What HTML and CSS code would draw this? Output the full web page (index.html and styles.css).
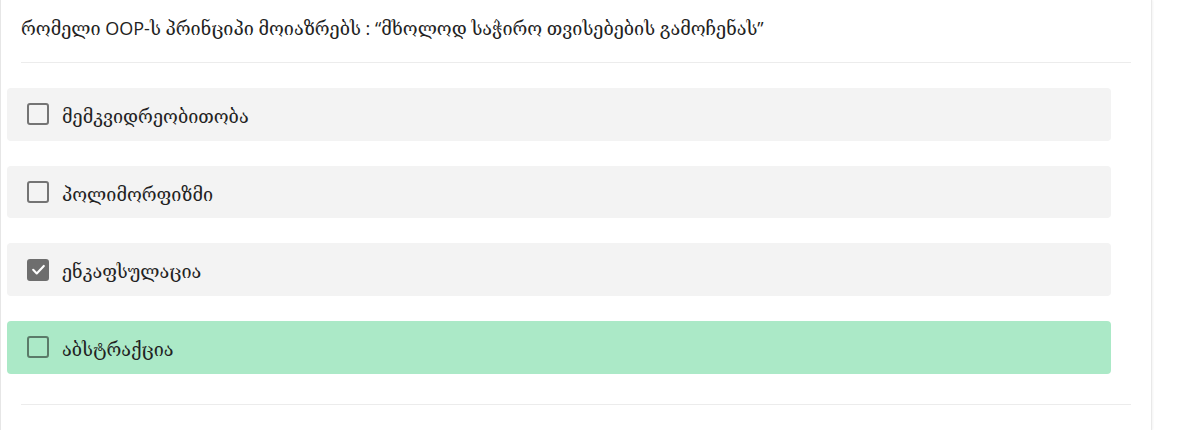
FILE: index.html
```html
<!DOCTYPE html>
<html lang="ka">
<head>
<meta charset="utf-8">
<link rel="stylesheet" href="styles.css">
</head>
<body>
<div class="page">
  <div class="card">
    <div class="question">რომელი OOP-ს პრინციპი მოიაზრებს : “მხოლოდ საჭირო თვისებების გამოჩენას”</div>
    <div class="options">
      <label class="option">
        <span class="box"></span>
        <span class="text">მემკვიდრეობითობა</span>
      </label>
      <label class="option">
        <span class="box"></span>
        <span class="text">პოლიმორფიზმი</span>
      </label>
      <label class="option">
        <span class="box checked">
          <svg viewBox="0 0 24 24" width="17" height="17"><path d="M4.5 12.5l5 5L19.5 7" fill="none" stroke="#fff" stroke-width="3" stroke-linecap="round" stroke-linejoin="round"/></svg>
        </span>
        <span class="text">ენკაფსულაცია</span>
      </label>
      <label class="option correct">
        <span class="box"></span>
        <span class="text">აბსტრაქცია</span>
      </label>
    </div>
    <div class="divider"></div>
  </div>
</div>
</body>
</html>
```
FILE: styles.css
```css
html, body {
  margin: 0;
  padding: 0;
  background: #fff;
}
body {
  font-family: "Open Sans", "DejaVu Serif", serif;
  color: #222;
}
.page {
  width: 1152px;
  height: 430px;
  border-left: 1px solid #e6e6e6;
  border-right: 1px solid #e9e9e9;
  box-shadow: 1px 0 2px rgba(0,0,0,0.05);
  box-sizing: border-box;
}
.card {
  padding: 0 20px 0 6px;
}
.question {
  margin-left: 14px;
  padding: 16px 0 22px;
  font-size: 18px;
  line-height: 24px;
  border-bottom: 1px solid #ececec;
}
.options {
  display: flex;
  flex-direction: column;
  gap: 25px;
  padding: 25px 20px 0 0;
}
.option {
  display: flex;
  align-items: center;
  height: 52.7px;
  padding-left: 20px;
  background: #f3f3f3;
  border-radius: 4px;
  font-size: 18px;
}
.option.correct {
  background: #abe9c7;
}
.text {
  padding-top: 3px;
}
.box {
  width: 22px;
  height: 22px;
  box-sizing: border-box;
  border: 2.5px solid #747474;
  border-radius: 3px;
  display: flex;
  align-items: center;
  justify-content: center;
  margin-right: 13px;
}
.box.checked {
  background: #6e6e6e;
  border-color: #6e6e6e;
}
.correct .box {
  border-color: #5b7b69;
}
.divider {
  margin: 30px 0 0 14px;
  border-top: 1px solid #ececec;
}
```
